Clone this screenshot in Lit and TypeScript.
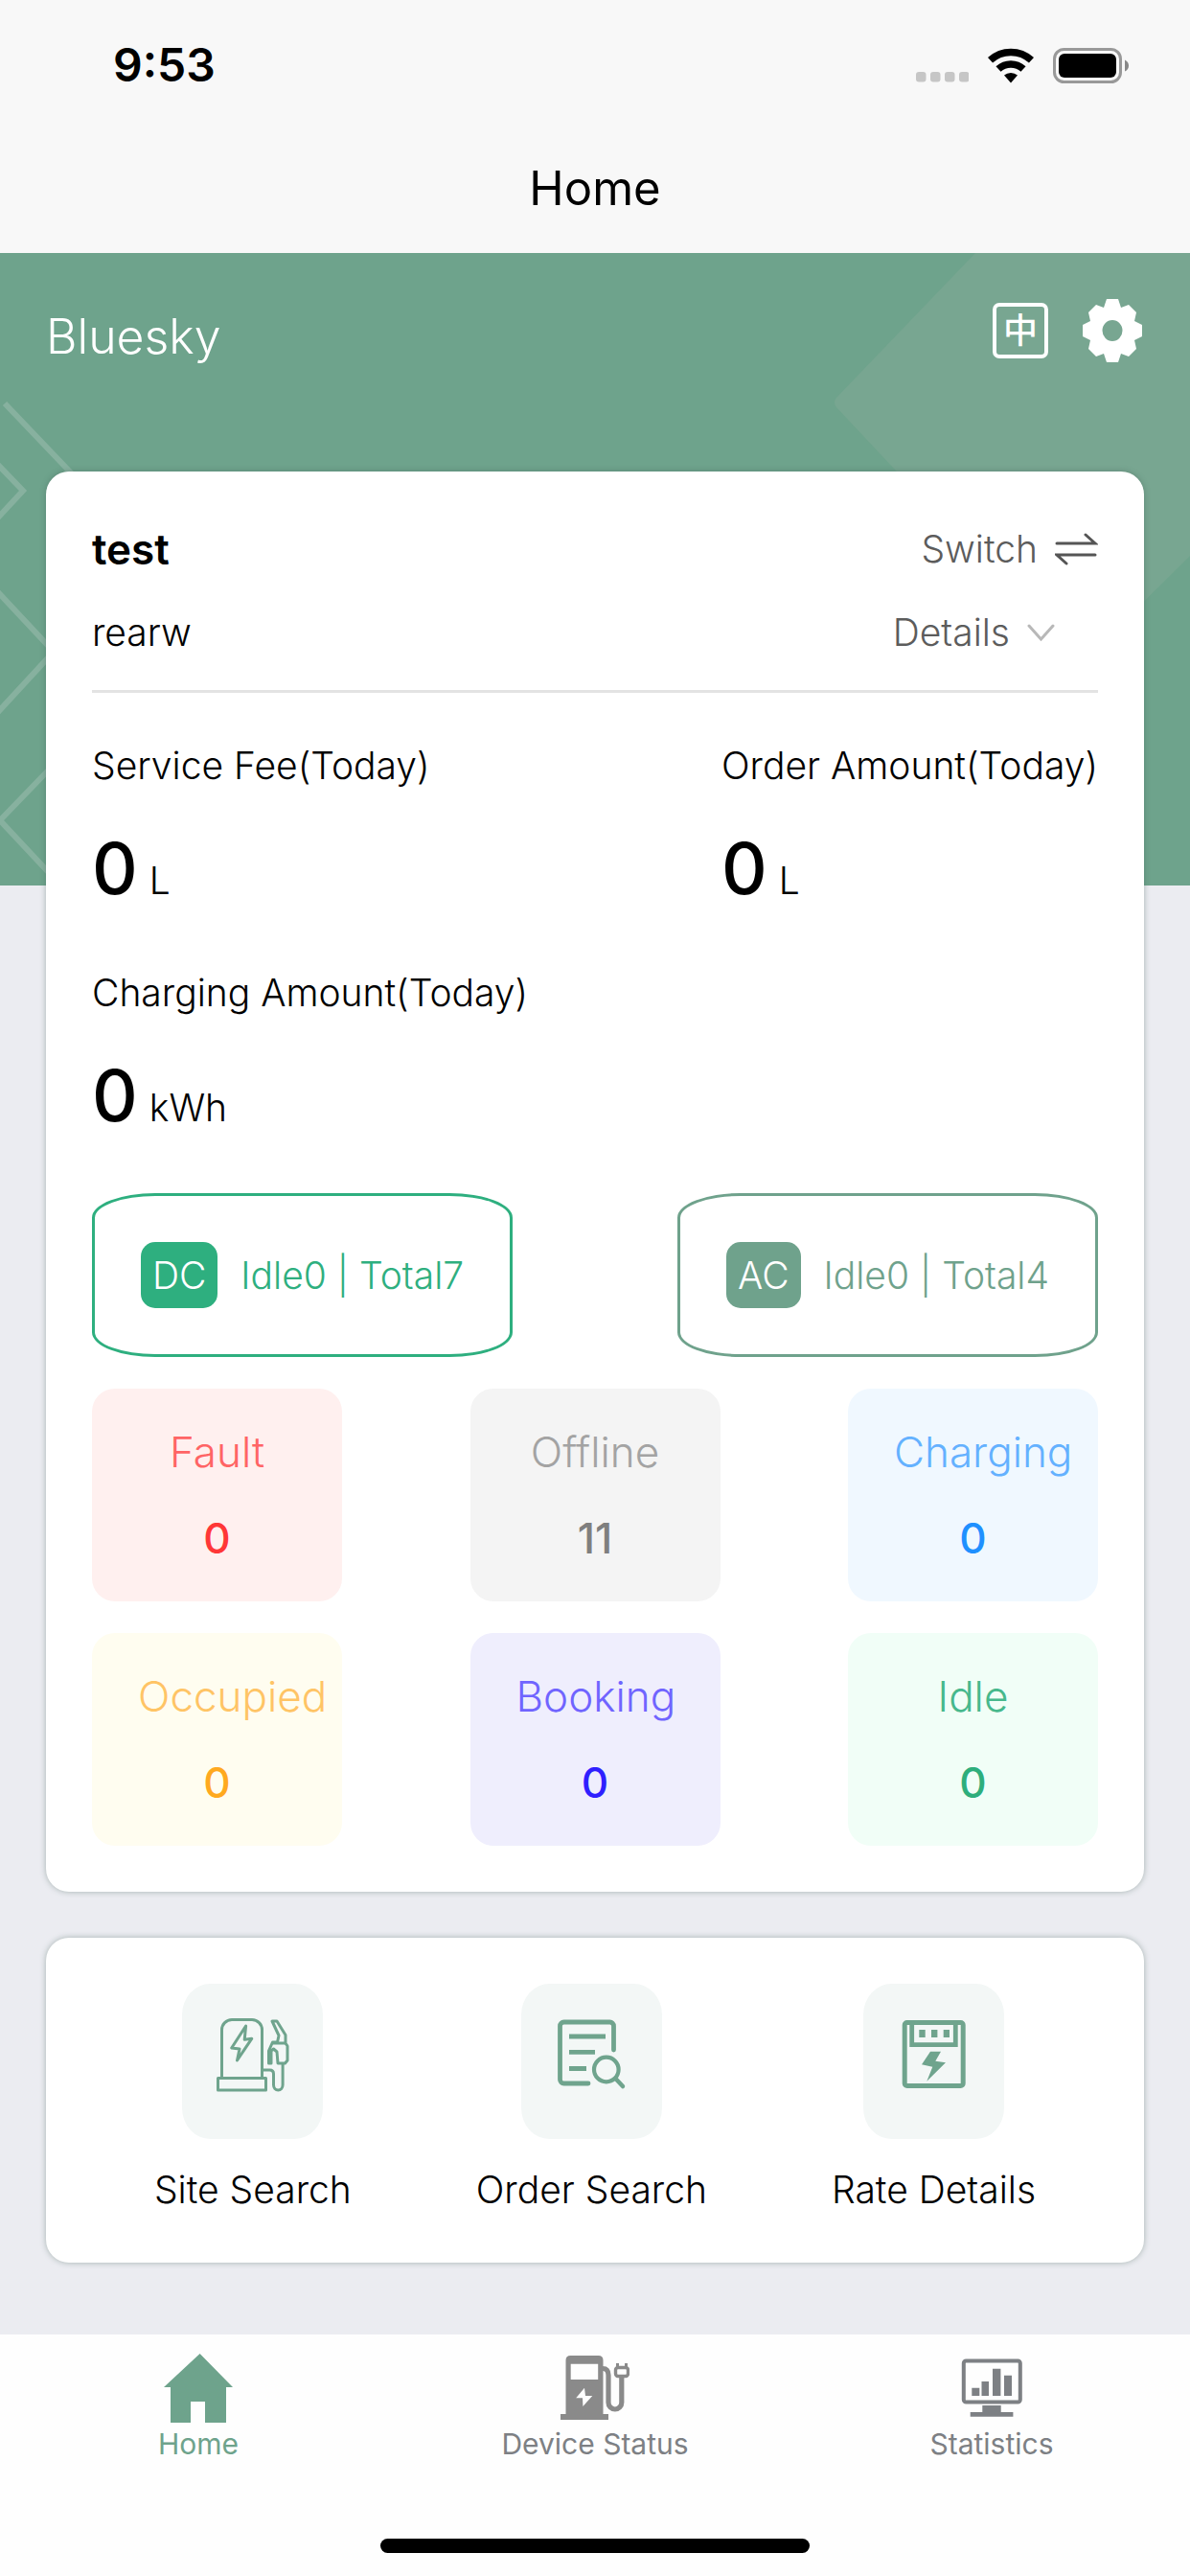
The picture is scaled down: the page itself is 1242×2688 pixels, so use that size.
import { LitElement, html, css, svg } from "lit";
import { customElement } from "lit/decorators.js";

const stats = [
  { label: "Service Fee(Today)", value: "0", unit: "L" },
  { label: "Order Amount(Today)", value: "0", unit: "L" },
  { label: "Charging Amount(Today)", value: "0", unit: "kWh" },
];

const connectors = [
  { kind: "DC", tone: "dc", idle: 0, total: 7 },
  { kind: "AC", tone: "ac", idle: 0, total: 4 },
];

const states = [
  { label: "Fault", value: 0, tone: "fault" },
  { label: "Offline", value: 11, tone: "offline" },
  { label: "Charging", value: 0, tone: "charging" },
  { label: "Occupied", value: 0, tone: "occupied" },
  { label: "Booking", value: 0, tone: "booking" },
  { label: "Idle", value: 0, tone: "idle" },
];

const siteIcon = svg`
  <g fill="none" stroke="currentColor" stroke-width="3" stroke-linejoin="round">
    <path d="M41.500 98V48a10.500 10.500 0 0 1 10.500-10.500h21a10.500 10.500 0 0 1 10.500 10.500v50"/>
    <rect x="37.500" y="98.500" width="50" height="12.500"/>
    <path d="M66.600 44 51.700 67 60 68l-2.500 12 15.200-22.700-7.500 1z"/>
    <path d="M84 90h7.500q4 0 4 4v11.500a4.800 5.500 0 0 0 9.600 0V83"/>
    <path d="M94 39h5l9 14.500V62l2 3v15l-2.500 3H100l-1-12-3.500-3-2.500 2v13h-2.500V70l4-9h5l1.500-7z"/>
    <path d="M95 62h14"/>
  </g>`;

const orderIcon = svg`
  <g fill="none" stroke="currentColor" stroke-width="4.800" stroke-linecap="round">
    <path d="M96.500 69V44a4 4 0 0 0-4-4h-48a4 4 0 0 0-4 4v56a4 4 0 0 0 4 4H70"/>
    <g stroke-linecap="butt"><path d="M50 55h38M50 71.300h27M50 88.500h18"/></g>
    <circle cx="88.800" cy="89.500" r="12.800" stroke-width="4.200"/>
    <path d="m98.500 99 7.500 8" stroke-width="4.500"/>
  </g>`;

const rateIcon = svg`
  <rect x="43.200" y="40.500" width="61" height="66" rx="2.500" fill="none" stroke="currentColor" stroke-width="5"/>
  <path d="M50.700 40v23.700h45.600V40" fill="none" stroke="currentColor" stroke-width="4.800"/>
  <path fill="currentColor" d="M58.300 48h6.400v8h-6.400zM71 48h6.400v8H71zM83.700 48H90v8h-6.300zM70 70.700h11l-5.700 10L86 82.300l-19.700 19.400 6-15-11.300-2.400z"/>`;

const tools = [
  { label: "Site Search", icon: siteIcon },
  { label: "Order Search", icon: orderIcon },
  { label: "Rate Details", icon: rateIcon },
];

const homeIcon = svg`<path fill="currentColor" d="M37.600 0 72 35h-7v37H43V50H28v22H7V35H0z"/>`;

const deviceIcon = svg`
  <path fill="#8a8a8a" fill-rule="evenodd" d="M5.500 63V7q0-5 5-5h29q5 0 5 5v56H50v6H0v-6zM10.700 10.700V27h28.500V10.700zM25 35.700 16.200 46.300H23L23.400 55l9.900-11H26z"/>
  <g fill="none" stroke="#8a8a8a">
    <path stroke-width="5.200" d="M44 15.500q6 0 6 7V51a6.900 7 0 0 0 13.800 0V24"/>
    <rect x="57.500" y="14.500" width="13" height="9" rx="2.500" stroke-width="3.400"/>
    <path stroke-width="3" d="M59.500 10v4M68.500 10v4"/>
  </g>`;

const statisticsIcon = svg`
  <rect x="6.800" y="7.500" width="59" height="43" rx="2.500" fill="none" stroke="currentColor" stroke-width="4"/>
  <path fill="currentColor" d="M15.300 35.700h8V44h-8zM25.500 29H33v15h-7.500zM37 15.700h8.400V44H37zM49 22.700h8V44h-8zM26.300 54h19.400v7h12.700v4.700H13.700V61h12.600z"/>`;

const tabs = [
  { label: "Home", icon: homeIcon, active: true },
  { label: "Device Status", icon: deviceIcon, active: false },
  { label: "Statistics", icon: statisticsIcon, active: false },
];

@customElement("app-root")
export class AppRoot extends LitElement {
  static styles = css`
    :host {
      display: flex;
      flex-direction: column;
      min-height: 100vh;
      background: #ebecf1;
      color: #000;
      font-family: Inter, "Noto Sans CJK SC", sans-serif;
      font-size: 39px;
      line-height: 54px;
    }
    * { box-sizing: border-box; margin: 0; }
    svg { display: block; }
    button, a { border: 0; padding: 0; background: none; color: inherit; font: inherit; text-decoration: none; }

    .top { background: #f8f8f8; }
    .status {
      display: flex;
      align-items: center;
      justify-content: space-between;
      height: 132px;
      padding: 4px 64px 0 118px;
    }
    .time { font-size: 48px; font-weight: 600; }
    .signals { display: flex; align-items: flex-end; gap: 20px; }
    .title { font-size: 49px; font-weight: 400; line-height: 66px; text-align: center; padding: 32px 0 34px; }

    .hero { display: grid; height: 660px; background: #6ea38c; overflow: hidden; }
    .pattern { grid-area: 1 / 1; }
    .pattern.left { justify-self: start; }
    .pattern.right { justify-self: end; }
    .brand-row {
      grid-area: 1 / 1;
      display: flex;
      align-items: flex-start;
      justify-content: space-between;
      padding: 48px;
      color: #fff;
      z-index: 1;
    }
    .brand { font-size: 50px; font-weight: 300; line-height: 78px; }
    .actions { display: flex; align-items: center; gap: 34px; }
    .lang {
      width: 58px;
      height: 58px;
      border: 4px solid #fff;
      border-radius: 7px;
      font-size: 36px;
      font-weight: 500;
      line-height: 48px;
      text-align: center;
    }

    main {
      flex: 1;
      display: flex;
      flex-direction: column;
      gap: 48px;
      margin-top: -432px;
      padding: 0 48px 72px;
      z-index: 2;
    }
    .card {
      padding: 48px;
      border-radius: 24px;
      background: #fff;
      box-shadow: 0 0 6px rgba(60, 90, 80, 0.4);
    }
    .row { display: flex; align-items: center; justify-content: space-between; }
    .site { font-size: 44px; font-weight: 600; line-height: 66px; }
    .sub { margin-top: 27px; padding-bottom: 33px; border-bottom: 3px solid #e3e3e3; }
    .sub, .label, .unit, .tool { font-weight: 300; }
    .link { display: flex; align-items: center; gap: 18px; color: #5c5c5c; font-weight: 300; }
    .sub .link { margin-right: 45px; }

    .stats { display: flex; flex-wrap: wrap; justify-content: space-between; row-gap: 58px; margin-top: 49px; }
    .stats dl { display: grid; gap: 35px; }
    .figure { display: flex; align-items: baseline; gap: 12px; }
    .number { font-size: 74px; font-weight: 500; line-height: 90px; }

    .connectors { display: flex; justify-content: space-between; margin-top: 57px; }
    .connector {
      display: flex;
      align-items: center;
      justify-content: center;
      gap: 24px;
      min-width: 439px;
      height: 171px;
      border: 3px solid;
      border-radius: 15%;
      font-weight: 300;
    }
    .connector.dc { color: #2eaf7f; }
    .connector.ac { color: #6fa28c; }
    .badge { padding: 0 12px; border-radius: 15px; line-height: 69px; }
    .dc .badge { background: #2eaf7f; }
    .ac .badge { background: #6fa28c; }
    .kind { color: #fff; }

    .states { display: grid; grid-template-columns: repeat(3, 261px); justify-content: space-between; row-gap: 33px; margin-top: 33px; }
    .state {
      display: flex;
      flex-direction: column;
      gap: 30px;
      padding: 36px 48px;
      border-radius: 24px;
      font-size: 44px;
      line-height: 60px;
      text-align: center;
      white-space: nowrap;
    }
    .state-name { font-weight: 300; }
    .state-count { font-weight: 500; }
    .fault { background: #fff0ef; color: #ff3737; }
    .fault .state-name { color: #ff6465; }
    .offline { background: #f4f4f4; color: #7f7f7f; }
    .offline .state-name { color: #a3a3a3; }
    .charging { background: #f0f8ff; color: #1f90ff; }
    .charging .state-name { color: #64b1ff; }
    .occupied { background: #fffdf0; color: #ffa91f; }
    .occupied .state-name { color: #ffc465; }
    .booking { background: #efeefd; color: #2f1fff; }
    .booking .state-name { color: #7064ff; }
    .idle { background: #f1fef7; color: #2eae7c; }
    .idle .state-name { color: #47b88c; }

    .tools { display: flex; justify-content: space-around; }
    .tool { display: flex; flex-direction: column; align-items: center; gap: 25px; line-height: 56px; }
    .tile { border-radius: 20%; background: #f3f7f6; color: #6fa48d; }

    .bottom { background: #fefefe; }
    .tabs { display: grid; grid-template-columns: repeat(3, 1fr); padding-top: 20px; }
    .tab { display: flex; flex-direction: column; align-items: center; gap: 4px; color: #7d8084; font-size: 30px; line-height: 36px; }
    .tab.active { color: #6ea38c; }
    .indicator { width: 36%; height: 15px; margin: 81px auto 24px; border-radius: 8px; background: #000; }
  `;

  render() {
    return html`
      <header class="top">
        <div class="status">
          <span class="time">9:53</span>
          <div class="signals">
            <svg width="55" height="12" viewBox="0 0 55 12" fill="#c6c6c6" aria-hidden="true">
              <rect x="0" y="0" width="10.500" height="10.500" rx="3"/><rect x="15" y="0" width="10.500" height="10.500" rx="3"/>
              <rect x="30" y="0" width="10.500" height="10.500" rx="3"/><rect x="45" y="0" width="10.500" height="10.500" rx="3"/>
            </svg>
            <svg width="48" height="37" viewBox="0 0 48 37" aria-hidden="true">
              <g fill="none" stroke="#000" stroke-width="7.600">
                <path d="M2.500 12.800a31.800 31.800 0 0 1 43 0"/><path d="M11 22a19.300 19.300 0 0 1 26 0"/>
              </g>
              <path d="M24 36.500 17 28.600a10.500 10.500 0 0 1 14 0z"/>
            </svg>
            <svg width="79" height="37" viewBox="0 0 79 37" aria-hidden="true">
              <rect x="1.500" y="1.500" width="69" height="34" rx="10" fill="none" stroke="#999" stroke-width="3"/>
              <rect x="6" y="6" width="60" height="25" rx="6"/>
              <path d="M75 12.500q4 2 4 6t-4 6z" fill="#888"/>
            </svg>
          </div>
        </div>
        <h1 class="title">Home</h1>
      </header>

      <section class="hero">
        <svg class="pattern left" width="90" height="660" viewBox="0 0 90 660" fill="none" stroke="#87b19f" stroke-width="6" aria-hidden="true">
          <path d="M5 157 90 246M-3 220l27 28-27 29M-3 353l59 63-59 64M56 534 0 592l56 60"/>
        </svg>
        <svg class="pattern right" width="380" height="660" viewBox="0 0 380 660" fill="#78a691" aria-hidden="true">
          <path d="M156 0 11 151q-4 5 0 10L240 405q20 18 42 8L380 316V0z"/>
        </svg>
        <div class="brand-row">
          <h2 class="brand">Bluesky</h2>
          <div class="actions">
            <button class="lang" type="button">中</button>
            <button type="button" aria-label="Settings">
              <svg width="66" height="66" viewBox="-33 -33 66 66">
                <path fill="#fff" fill-rule="evenodd" d="M-6-33H6L9-24 17-27 25-19 23-10 31-6V6L23 10 25 19 17 27 9 24 6 33H-6L-9 24-17 27-25 19-23 10-31 6V-6L-23-10-25-19-17-27-9-24zM0-11A10.500 11 0 0 0 0 11 10.500 11 0 0 0 0-11z"/>
              </svg>
            </button>
          </div>
        </div>
      </section>

      <main>
        <section class="card">
          <div class="row">
            <h3 class="site">test</h3>
            <button class="link" type="button">
              Switch
              <svg width="45" height="34" viewBox="0 0 45 34" fill="none" stroke="#555" stroke-width="3" stroke-linecap="round" aria-hidden="true">
                <path d="M2 11h40L32 2M42 23H2l10 9"/>
              </svg>
            </button>
          </div>
          <div class="row sub">
            <span>rearw</span>
            <button class="link" type="button">
              Details
              <svg width="29" height="18" viewBox="0 0 29 18" fill="none" stroke="#b8b8b8" stroke-width="3" stroke-linecap="round" aria-hidden="true">
                <path d="m2 2 12.500 14L27 2"/>
              </svg>
            </button>
          </div>

          <div class="stats">
            ${stats.map((s) => html`
              <dl>
                <dt class="label">${s.label}</dt>
                <dd class="figure"><span class="number">${s.value}</span><span class="unit">${s.unit}</span></dd>
              </dl>`)}
          </div>

          <div class="connectors">
            ${connectors.map((c) => html`
              <div class="connector ${c.tone}">
                <span class="badge"><span class="kind">${c.kind}</span></span>
                <span>Idle${c.idle} | Total${c.total}</span>
              </div>`)}
          </div>

          <div class="states">
            ${states.map((s) => html`
              <div class="state ${s.tone}">
                <span class="state-name">${s.label}</span>
                <span class="state-count">${s.value}</span>
              </div>`)}
          </div>
        </section>

        <section class="card tools">
          ${tools.map((t) => html`
            <button class="tool" type="button">
              <svg class="tile" width="147" height="162" viewBox="0 0 147 162" aria-hidden="true">${t.icon}</svg>
              <span>${t.label}</span>
            </button>`)}
        </section>
      </main>

      <footer class="bottom">
        <nav class="tabs">
          ${tabs.map((t) => html`
            <a class="tab ${t.active ? "active" : ""}" href="#">
              <svg width="72" height="72" viewBox="0 0 72 72" aria-hidden="true">${t.icon}</svg>
              <span>${t.label}</span>
            </a>`)}
        </nav>
        <div class="indicator"></div>
      </footer>
    `;
  }
}
